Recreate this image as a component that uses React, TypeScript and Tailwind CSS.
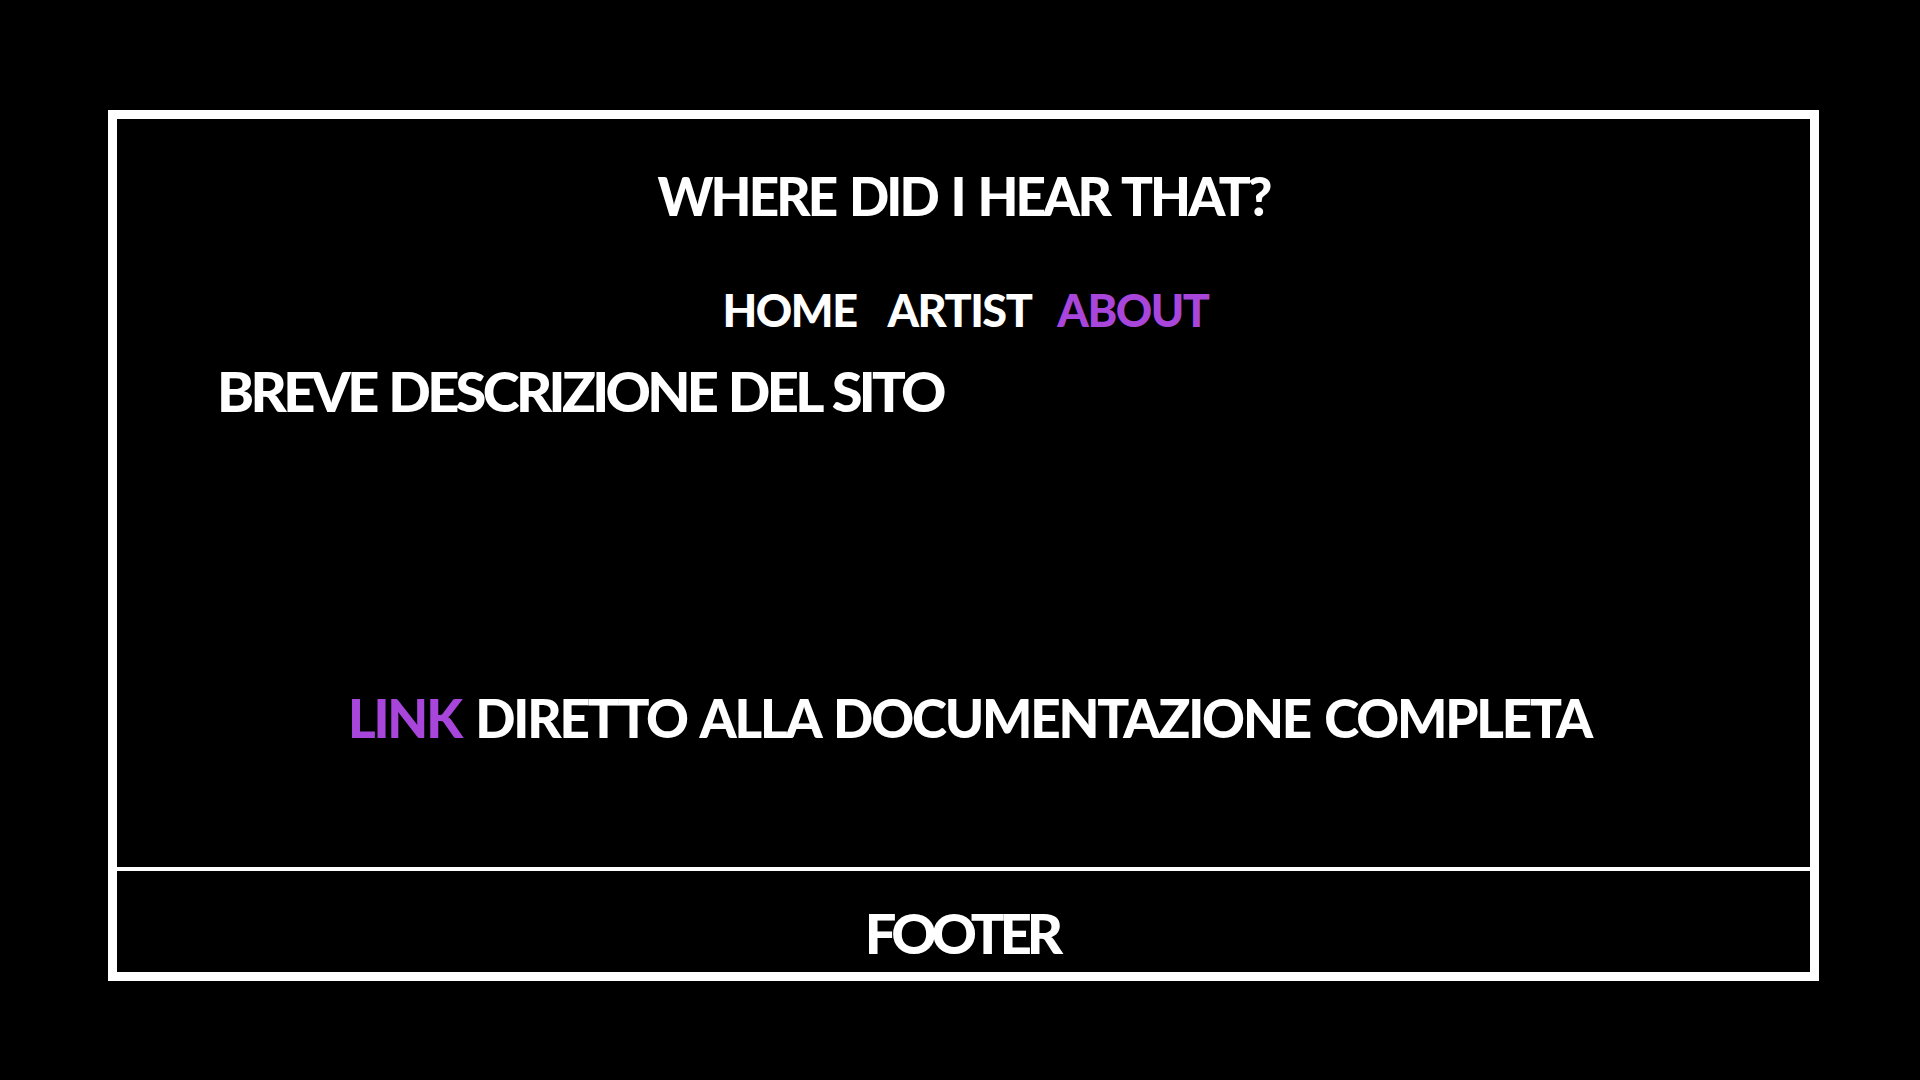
import React from "react";

export default function App() {
  const font = { fontFamily: "Lato, 'Open Sans', sans-serif" };
  return (
    <div className="w-[1920px] h-[1080px] bg-black overflow-hidden" style={font}>
      <div className="ml-[108px] pt-[110px]">
        <div className="w-[1711px] h-[871px] border-[9px] border-white flex flex-col">
          <main className="h-[752px] border-b-4 border-white flex flex-col">
            <h1 className="mt-[50px] text-center text-white font-black text-[53px] leading-none tracking-[-2.9px] [word-spacing:4px]">
              WHERE DID I HEAR THAT?
            </h1>
            <nav className="mt-[66px] flex justify-center pl-[4px] text-[45px] leading-none font-black tracking-[-1.5px]">
              <a className="text-white">HOME</a>
              <a className="text-white ml-[31px]">ARTIST</a>
              <a className="text-[#a846dc] ml-[26px]">ABOUT</a>
            </nav>
            <p className="mt-[30px] ml-[100px] text-white font-black text-[56px] leading-none tracking-[-3.7px] [word-spacing:3px]">
              BREVE DESCRIZIONE DEL SITO
            </p>
            <p className="mt-[272px] text-center pl-[12px] text-white font-black text-[53px] leading-none tracking-[-2.2px] [word-spacing:4px]">
              <a className="text-[#a846dc]">LINK</a> DIRETTO ALLA DOCUMENTAZIONE COMPLETA
            </p>
          </main>
          <footer className="flex-1 pt-[34px] pr-[4px] text-center text-white font-black text-[56px] leading-none tracking-[-5px]">
            FOOTER
          </footer>
        </div>
      </div>
    </div>
  );
}
